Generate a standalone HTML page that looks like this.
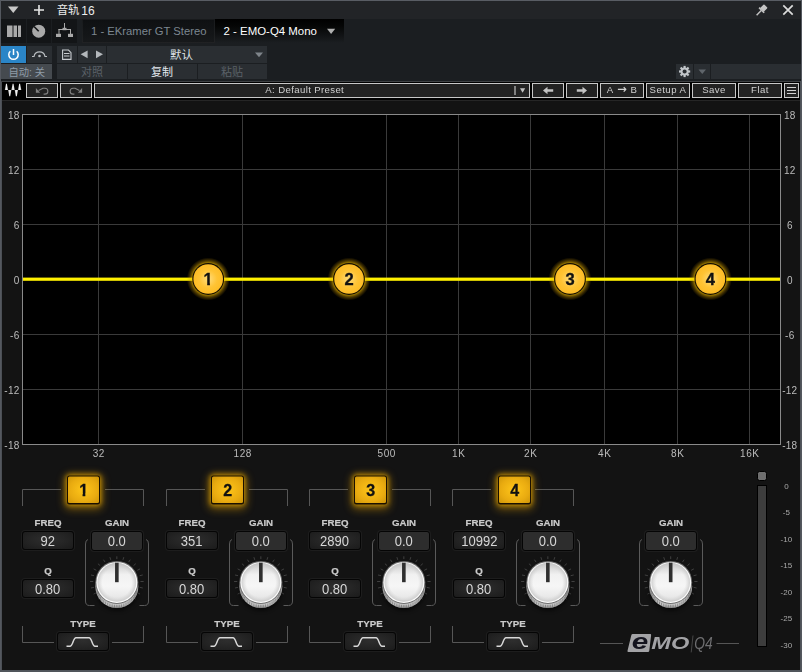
<!DOCTYPE html>
<html lang="zh">
<head>
<meta charset="utf-8">
<title>EMO-Q4</title>
<style>
html,body{margin:0;padding:0;background:#1b1e21;}
body{width:802px;height:672px;position:relative;overflow:hidden;font-family:"Liberation Sans","Noto Sans CJK SC",sans-serif;}
.a{position:absolute;box-sizing:border-box;}
.t{position:absolute;white-space:nowrap;line-height:1;}
/* host chrome */
#win{left:0;top:0;width:802px;height:672px;background:#1b1e21;}
#title{left:0;top:0;width:802px;height:19px;background:#222427;border-top:1px solid #595d64;}
.hb{background:#141618;}
.hb2{background:#2b2f33;}
.cn{font-family:"Liberation Sans","Noto Sans CJK SC",sans-serif;}
/* plugin */
#plug{left:2px;top:82px;width:798px;height:588px;background:#131313;}
#ptb{left:2px;top:82px;width:798px;height:18px;background:#000;}
.pb{position:absolute;box-sizing:border-box;border:1px solid #c8c8c8;background:#222;top:83px;height:15px;color:#d0d0d0;font-size:9.6px;letter-spacing:0.45px;line-height:12.4px;text-align:center;font-family:"Liberation Sans",sans-serif;white-space:nowrap;}
.lbl{position:absolute;color:#cbcbcb;font-weight:bold;font-size:9.7px;line-height:10px;-webkit-text-stroke:0.2px #cbcbcb;margin-top:-0.2px;text-align:center;width:60px;}
.vbox{position:absolute;box-sizing:border-box;border:1px solid #050505;border-radius:3px;background:radial-gradient(ellipse at 50% 45%,#2e2e2e 0%,#262626 45%,#1b1b1b 100%);color:#d6d6d6;font-size:14px;line-height:18.4px;text-align:center;width:52px;height:19px;box-shadow:0 0 0 1px rgba(60,60,60,0.25);}
.gbox{background:#2d2d2d;height:20px;line-height:18.4px;}
.vbox span{display:inline-block;transform:scaleX(0.93);}
.ax{position:absolute;color:#bcbcbc;font-size:10px;line-height:10px;letter-spacing:0.25px;}
.ms{position:absolute;color:#a8a8a8;font-size:8px;line-height:8px;text-align:center;width:30px;left:771.4px;}
</style>
</head>
<body>
<div id="win" class="a"></div>
<div id="title" class="a"></div>
<svg class="a" style="left:0;top:0" width="802" height="20" viewBox="0 0 802 20"><path d="M8 6.5 L18.5 6.5 L13.25 13 Z" fill="#c8c8c8"/><path d="M39 5 V15 M34 10 H44" stroke="#e6e6e6" stroke-width="1.6" fill="none"/><g transform="translate(761.2,10.6) rotate(45)" fill="#c4c4c4"><rect x="-2.6" y="-6.5" width="5.2" height="5.5" rx="0.8"/><rect x="-3.6" y="-1.4" width="7.2" height="1.6"/><rect x="-0.7" y="0" width="1.4" height="6.5"/></g><path d="M783.3 5.3 L792.7 14.7 M792.7 5.3 L783.3 14.7" stroke="#dcdcdc" stroke-width="1.7" fill="none"/></svg>
<div class="t" style="left:56.7px;top:4px;font-size:11.4px;color:#ececec;line-height:13px;">音轨<span style="font-size:12px;margin-left:1.8px;position:relative;top:0.5px">16</span></div>
<div class="a" style="left:1px;top:19px;width:25px;height:24px;background:#131517;"></div>
<div class="a" style="left:27px;top:19px;width:24px;height:24px;background:#131517;"></div>
<div class="a" style="left:52px;top:19px;width:25px;height:24px;background:#131517;"></div>
<svg class="a" style="left:0;top:19px" width="80" height="24" viewBox="0 19 80 24"><rect x="7" y="25.5" width="5.5" height="11.5" fill="#a9a9a9"/><rect x="13.5" y="25.5" width="3.5" height="11.5" fill="#a9a9a9"/><rect x="18" y="25.5" width="3" height="11.5" fill="#a9a9a9"/><circle cx="38.7" cy="31.2" r="6.5" fill="#a9a9a9"/><path d="M38.7 31.2 L34 26.5" stroke="#131517" stroke-width="1.6"/><g fill="#a9a9a9"><rect x="64" y="23" width="1" height="6"/><rect x="62.5" y="27.8" width="4" height="2.4"/><rect x="58.5" y="29" width="12.5" height="1"/><rect x="58.5" y="29" width="1" height="5"/><rect x="70" y="29" width="1" height="5"/><rect x="56" y="33.8" width="5" height="3.2"/><rect x="68" y="33.8" width="5" height="3.2"/></g></svg>
<div class="a" style="left:82px;top:19px;width:133px;height:24px;background:linear-gradient(#0e1012,#17191b);box-shadow:inset 0 0 0 1px rgba(255,255,255,0.045);"></div>
<div class="t" style="left:91px;top:25.5px;font-size:11.25px;color:#7d8791;">1 - EKramer GT Stereo</div>
<div class="a" style="left:215px;top:19px;width:129px;height:24px;background:linear-gradient(#000 0%,#050606 30%,#1b1e21 100%);"></div>
<div class="t" style="left:223.5px;top:25.5px;font-size:11.45px;color:#ffffff;">2 - EMO-Q4 Mono</div>
<svg class="a" style="left:324px;top:27px" width="14" height="8"><path d="M3 1.8 H11.2 L7.1 7 Z" fill="#b0b0b0"/></svg>
<div class="a" style="left:1px;top:46px;width:25px;height:17px;background:#2a85c7;"></div>
<div class="a" style="left:27px;top:46px;width:25px;height:17px;background:#2a2e32;"></div>
<div class="a" style="left:57px;top:46px;width:20px;height:17px;background:#2a2e32;"></div>
<div class="a" style="left:78px;top:46px;width:28px;height:17px;background:#2a2e32;"></div>
<div class="a" style="left:107px;top:46px;width:160px;height:17px;background:#2a2e32;"></div>
<svg class="a" style="left:0;top:46px" width="270" height="17" viewBox="0 46 270 17"><path d="M10.3 51.2 A4.7 4.7 0 1 0 16.7 51.2" stroke="#fff" stroke-width="1.5" fill="none"/><path d="M13.5 49 V55" stroke="#fff" stroke-width="1.5"/><path d="M32 56.5 H34 A5.6 5.6 0 0 1 45 56.5 H47" stroke="#b9bdc1" stroke-width="1.2" fill="none"/><circle cx="39.5" cy="56" r="1.3" fill="#b9bdc1"/><path d="M62.6 50 H68.5 L71 52.6 V59.4 H62.6 Z M64 53.5 H69.5 M64 56 H69.5" stroke="#c9cdd1" stroke-width="1.1" fill="none"/><path d="M87.6 50.4 V58.2 L80.6 54.3 Z" fill="#b4b8bc"/><path d="M96 50.4 V58.2 L103 54.3 Z" fill="#b4b8bc"/><path d="M255 52.5 H263 L259 57.2 Z" fill="#7f858b"/></svg>
<div class="t" style="left:170px;top:49px;font-size:11.5px;color:#dfe3e7;line-height:12px;">默认</div>
<div class="a" style="left:1px;top:64px;width:51px;height:15px;background:#454a4f;"></div>
<div class="a" style="left:57px;top:64px;width:70px;height:15px;background:#2a2e32;"></div>
<div class="a" style="left:128px;top:64px;width:69px;height:15px;background:#2a2e32;"></div>
<div class="a" style="left:198px;top:64px;width:69px;height:15px;background:#2a2e32;"></div>
<div class="t" style="left:8.5px;top:66.5px;font-size:10.3px;color:#8f9ca8;line-height:12px;">自动: 关</div>
<div class="t" style="left:81px;top:66px;font-size:11px;color:#5a6168;line-height:12px;">对照</div>
<div class="t" style="left:151px;top:66px;font-size:11px;color:#e3e8ee;line-height:12px;">复制</div>
<div class="t" style="left:221px;top:66px;font-size:11px;color:#5a6168;line-height:12px;">粘贴</div>
<div class="a" style="left:676px;top:64px;width:17px;height:15px;background:#2a2e32;"></div>
<div class="a" style="left:694px;top:64px;width:16px;height:15px;background:#2a2e32;"></div>
<div class="a" style="left:711px;top:64px;width:90px;height:15px;background:#2a2e32;"></div>
<svg class="a" style="left:676px;top:64px" width="36" height="15" viewBox="676 64 36 15"><rect x="683.5" y="65.9" width="2.2" height="3" fill="#c2c6ca" transform="rotate(0 684.6 71.5)"/><rect x="683.5" y="65.9" width="2.2" height="3" fill="#c2c6ca" transform="rotate(45 684.6 71.5)"/><rect x="683.5" y="65.9" width="2.2" height="3" fill="#c2c6ca" transform="rotate(90 684.6 71.5)"/><rect x="683.5" y="65.9" width="2.2" height="3" fill="#c2c6ca" transform="rotate(135 684.6 71.5)"/><rect x="683.5" y="65.9" width="2.2" height="3" fill="#c2c6ca" transform="rotate(180 684.6 71.5)"/><rect x="683.5" y="65.9" width="2.2" height="3" fill="#c2c6ca" transform="rotate(225 684.6 71.5)"/><rect x="683.5" y="65.9" width="2.2" height="3" fill="#c2c6ca" transform="rotate(270 684.6 71.5)"/><rect x="683.5" y="65.9" width="2.2" height="3" fill="#c2c6ca" transform="rotate(315 684.6 71.5)"/><circle cx="684.6" cy="71.5" r="3.1" fill="none" stroke="#c2c6ca" stroke-width="2"/><path d="M698.5 69.5 H706 L702.25 74 Z" fill="#5f656b"/></svg>
<div class="a" style="left:1px;top:81px;width:800px;height:1px;background:#3e4144;"></div>
<div class="a" style="left:1px;top:82px;width:1px;height:588px;background:#4b4f55;"></div>
<div id="plug" class="a"></div>
<div class="a" id="pl" style="left:0;top:0;width:802px;height:672px;will-change:transform;">
<div id="ptb" class="a"></div>
<svg class="a" style="left:2px;top:82px" width="24" height="18" viewBox="2 82 24 18"><defs><linearGradient id="wg" x1="0" y1="0" x2="1" y2="0"><stop offset="0" stop-color="#bdbdbd"/><stop offset="0.5" stop-color="#f4f4f4"/><stop offset="1" stop-color="#c8c8c8"/></linearGradient></defs><g fill="url(#wg)"><path d="M6 83.7 H6.9 L8.1 90 H4.8 Z"/><path d="M12.6 83.7 H13.5 L14.7 90 H11.4 Z"/><path d="M19.2 83.7 H20.1 L21.3 90 H18 Z"/><path d="M8.1 90 H11.4 L10.2 96.2 H9.3 Z"/><path d="M14.7 90 H18 L16.8 96.2 H15.9 Z"/></g></svg>
<div class="pb" style="left:26px;width:32px;"></div>
<div class="pb" style="left:60px;width:32px;"></div>
<div class="pb" style="left:94px;width:436px;padding-right:14.5px;letter-spacing:0.37px;">A: Default Preset</div>
<div class="pb" style="left:532px;width:32px;"></div>
<div class="pb" style="left:566px;width:32px;"></div>
<div class="pb" style="left:600px;width:44px;">A<span style="display:inline-block;width:17px;text-align:center;letter-spacing:0;font-family:'DejaVu Sans',sans-serif;font-size:11.5px;font-weight:bold;line-height:10px;position:relative;top:0.4px">→</span>B</div>
<div class="pb" style="left:646px;width:44px;">Setup A</div>
<div class="pb" style="left:692px;width:44px;">Save</div>
<div class="pb" style="left:738px;width:44px;">Flat</div>
<div class="pb" style="left:784px;width:15px;"></div>
<svg class="a" style="left:0;top:82px" width="802" height="18" viewBox="0 82 802 18"><g><path d="M38.6 90.4 L42.9 88.2 H44.9 A2.95 2.95 0 0 1 44.9 94.1 H43.6" stroke="#808080" stroke-width="1.1" fill="none"/><path d="M35.9 88 V92.7 H40.1 Z" fill="#808080"/></g><g transform="translate(118,0) scale(-1,1)"><path d="M38.6 90.4 L42.9 88.2 H44.9 A2.95 2.95 0 0 1 44.9 94.1 H43.6" stroke="#808080" stroke-width="1.1" fill="none"/><path d="M35.9 88 V92.7 H40.1 Z" fill="#808080"/></g><rect x="514.2" y="86" width="1.6" height="9" fill="#9a9a9a"/><path d="M520 88.3 H525.2 L522.6 92.8 Z" fill="#c0c0c0"/><path d="M543 90.5 L547.5 86.8 V89.2 H553.2 V91.8 H547.5 V94.2 Z" fill="#c4c4c4"/><path d="M587 90.5 L582.5 86.8 V89.2 H576.8 V91.8 H582.5 V94.2 Z" fill="#c4c4c4"/><path d="M787 87.5 H796 M787 90.5 H796 M787 93.5 H796" stroke="#d0d0d0" stroke-width="1.2"/></svg>
<div class="a" style="left:2px;top:100px;width:798px;height:1px;background:#262626"></div>
<svg class="a" style="left:0;top:104px" width="802" height="360" viewBox="0 104 802 360">
<defs><clipPath id="c1a"><path d="M198 265 H220 V283.1 H209.9 V287 H207.2 V283.1 H198 Z"/></clipPath><radialGradient id="ng" cx="50%" cy="50%" r="50%"><stop offset="0" stop-color="#ffdc7c"/><stop offset="0.6" stop-color="#ffc333"/><stop offset="1" stop-color="#fdbc26"/></radialGradient><radialGradient id="glow" cx="50%" cy="50%" r="50%"><stop offset="0.72" stop-color="#ffc800" stop-opacity="0.7"/><stop offset="0.84" stop-color="#e0a800" stop-opacity="0.36"/><stop offset="1" stop-color="#c89000" stop-opacity="0"/></radialGradient></defs>
<rect x="22.5" y="114.5" width="758" height="330" fill="#000" stroke="#8a8a8a" stroke-width="1"/>
<rect x="23" y="169" width="757" height="1" fill="#3a3a3a"/>
<rect x="23" y="224" width="757" height="1" fill="#3a3a3a"/>
<rect x="23" y="279" width="757" height="1" fill="#3a3a3a"/>
<rect x="23" y="334" width="757" height="1" fill="#3a3a3a"/>
<rect x="23" y="389" width="757" height="1" fill="#3a3a3a"/>
<rect x="98" y="115" width="1" height="329" fill="#3a3a3a"/>
<rect x="242" y="115" width="1" height="329" fill="#3a3a3a"/>
<rect x="386" y="115" width="1" height="329" fill="#3a3a3a"/>
<rect x="458" y="115" width="1" height="329" fill="#3a3a3a"/>
<rect x="530" y="115" width="1" height="329" fill="#3a3a3a"/>
<rect x="604" y="115" width="1" height="329" fill="#3a3a3a"/>
<rect x="677" y="115" width="1" height="329" fill="#3a3a3a"/>
<rect x="749" y="115" width="1" height="329" fill="#3a3a3a"/>
<rect x="23" y="277.6" width="757" height="3.2" fill="#fff000"/>
<circle cx="208.2" cy="279" r="21.5" fill="url(#glow)"/>
<circle cx="208.2" cy="279" r="15.9" fill="#120c00"/>
<circle cx="208.2" cy="279" r="14.8" fill="url(#ng)"/>
<text x="208.2" y="285" text-anchor="middle" font-family="Liberation Sans, sans-serif" font-weight="bold" font-size="16.5" fill="#111" stroke="#111" stroke-width="0.35" clip-path="url(#c1a)">1</text>
<circle cx="349" cy="279" r="21.5" fill="url(#glow)"/>
<circle cx="349" cy="279" r="15.9" fill="#120c00"/>
<circle cx="349" cy="279" r="14.8" fill="url(#ng)"/>
<text x="349" y="285" text-anchor="middle" font-family="Liberation Sans, sans-serif" font-weight="bold" font-size="16.5" fill="#111" stroke="#111" stroke-width="0.35">2</text>
<circle cx="570" cy="279" r="21.5" fill="url(#glow)"/>
<circle cx="570" cy="279" r="15.9" fill="#120c00"/>
<circle cx="570" cy="279" r="14.8" fill="url(#ng)"/>
<text x="570" y="285" text-anchor="middle" font-family="Liberation Sans, sans-serif" font-weight="bold" font-size="16.5" fill="#111" stroke="#111" stroke-width="0.35">3</text>
<circle cx="710.4" cy="279" r="21.5" fill="url(#glow)"/>
<circle cx="710.4" cy="279" r="15.9" fill="#120c00"/>
<circle cx="710.4" cy="279" r="14.8" fill="url(#ng)"/>
<text x="710.4" y="285" text-anchor="middle" font-family="Liberation Sans, sans-serif" font-weight="bold" font-size="16.5" fill="#111" stroke="#111" stroke-width="0.35">4</text>
</svg>
<div class="ax" style="left:0;width:19.5px;text-align:right;top:111.4px">18</div>
<div class="ax" style="left:774.8px;width:30px;text-align:center;top:111.4px">18</div>
<div class="ax" style="left:0;width:19.5px;text-align:right;top:166.4px">12</div>
<div class="ax" style="left:774.8px;width:30px;text-align:center;top:166.4px">12</div>
<div class="ax" style="left:0;width:19.5px;text-align:right;top:221.4px">6</div>
<div class="ax" style="left:774.8px;width:30px;text-align:center;top:221.4px">6</div>
<div class="ax" style="left:0;width:19.5px;text-align:right;top:276.4px">0</div>
<div class="ax" style="left:774.8px;width:30px;text-align:center;top:276.4px">0</div>
<div class="ax" style="left:0;width:19.5px;text-align:right;top:331.4px">-6</div>
<div class="ax" style="left:774.8px;width:30px;text-align:center;top:331.4px">-6</div>
<div class="ax" style="left:0;width:19.5px;text-align:right;top:386.4px">-12</div>
<div class="ax" style="left:774.8px;width:30px;text-align:center;top:386.4px">-12</div>
<div class="ax" style="left:0;width:19.5px;text-align:right;top:441.4px">-18</div>
<div class="ax" style="left:774.8px;width:30px;text-align:center;top:441.4px">-18</div>
<div class="ax" style="left:78.8px;width:40px;text-align:center;top:449px;letter-spacing:0.6px">32</div>
<div class="ax" style="left:222.8px;width:40px;text-align:center;top:449px;letter-spacing:0.6px">128</div>
<div class="ax" style="left:366.8px;width:40px;text-align:center;top:449px;letter-spacing:0.6px">500</div>
<div class="ax" style="left:438.8px;width:40px;text-align:center;top:449px;letter-spacing:0.6px">1K</div>
<div class="ax" style="left:510.8px;width:40px;text-align:center;top:449px;letter-spacing:0.6px">2K</div>
<div class="ax" style="left:584.8px;width:40px;text-align:center;top:449px;letter-spacing:0.6px">4K</div>
<div class="ax" style="left:657.8px;width:40px;text-align:center;top:449px;letter-spacing:0.6px">8K</div>
<div class="ax" style="left:729.8px;width:40px;text-align:center;top:449px;letter-spacing:0.6px">16K</div>
<div class="vbox" style="left:57px;top:632px"></div>
<div class="vbox" style="left:201px;top:632px"></div>
<div class="vbox" style="left:344px;top:632px"></div>
<div class="vbox" style="left:487px;top:632px"></div>
<svg class="a" style="left:0;top:464px" width="802" height="206" viewBox="0 464 802 206">
<defs><clipPath id="c1b"><path d="M74 478 H94 V493.6 H85.3 V498 H82.6 V493.6 H74 Z"/></clipPath><radialGradient id="bb" cx="50%" cy="50%" r="75%"><stop offset="0" stop-color="#ffc61a"/><stop offset="0.6" stop-color="#e9ab10"/><stop offset="1" stop-color="#c99208"/></radialGradient><filter id="bl" x="-50%" y="-50%" width="200%" height="200%"><feGaussianBlur stdDeviation="2.6"/></filter><filter id="bl2" x="-60%" y="-60%" width="220%" height="220%"><feGaussianBlur stdDeviation="4.5"/></filter><filter id="sh" x="-50%" y="-50%" width="200%" height="200%"><feGaussianBlur stdDeviation="2.2"/></filter><linearGradient id="kf" x1="0" y1="0" x2="0" y2="1"><stop offset="0" stop-color="#c9c9c9"/><stop offset="0.3" stop-color="#f1f1f1"/><stop offset="0.6" stop-color="#f6f6f6"/><stop offset="1" stop-color="#e2e2e2"/></linearGradient><radialGradient id="kr" cx="50%" cy="50%" r="50%"><stop offset="0.75" stop-color="#d0d0d0" stop-opacity="0"/><stop offset="1" stop-color="#c4c4c4" stop-opacity="0.75"/></radialGradient><linearGradient id="ks" x1="0" y1="0" x2="0" y2="1"><stop offset="0" stop-color="#8a8a8a"/><stop offset="0.7" stop-color="#b0b0b0"/><stop offset="0.92" stop-color="#c4c4c4"/><stop offset="1" stop-color="#8c8c8c"/></linearGradient></defs>
<path d="M22.5 506 V489.5 H61 M105 489.5 H143.5 V506" stroke="#565656" stroke-width="1" fill="none"/>
<path d="M22.5 626 V642.5 H54 M112 642.5 H143.5 V626" stroke="#565656" stroke-width="1" fill="none"/>
<rect x="64" y="474" width="39" height="36" rx="6" fill="#d89a00" opacity="0.42" filter="url(#bl2)"/>
<rect x="66" y="474.5" width="35" height="31" rx="4" fill="#e8a800" opacity="0.75" filter="url(#bl)"/>
<rect x="67" y="475.5" width="33" height="29" rx="2.5" fill="#1a1000"/>
<rect x="68" y="476.5" width="31" height="26.5" rx="1.5" fill="url(#bb)"/>
<text x="83.6" y="496" text-anchor="middle" font-family="Liberation Sans, sans-serif" font-weight="bold" font-size="16" fill="#111" stroke="#111" stroke-width="0.3" clip-path="url(#c1b)">1</text>
<path d="M88.0 539.5 Q85.5 540 85.5 544 V601 Q85.5 605.5 89.5 605.5 H94.5" stroke="#5a5a5a" stroke-width="1" fill="none"/><path d="M146.0 539.5 Q148.5 540 148.5 544 V601 Q148.5 605.5 144.5 605.5 H139.5" stroke="#5a5a5a" stroke-width="1" fill="none"/>
<path d="M100.16 597.34 L97.90 599.32" stroke="#404040" stroke-width="1"/><path d="M96.41 592.70 L93.64 594.10" stroke="#404040" stroke-width="1"/><path d="M94.05 587.30 L90.96 588.02" stroke="#404040" stroke-width="1"/><path d="M93.25 581.50 L90.05 581.50" stroke="#404040" stroke-width="1"/><path d="M94.05 575.70 L90.96 574.98" stroke="#404040" stroke-width="1"/><path d="M96.41 570.30 L93.64 568.90" stroke="#404040" stroke-width="1"/><path d="M100.16 565.66 L97.90 563.68" stroke="#404040" stroke-width="1"/><path d="M105.05 562.10 L103.45 559.68" stroke="#404040" stroke-width="1"/><path d="M110.74 559.86 L109.91 557.16" stroke="#404040" stroke-width="1"/><path d="M116.85 559.10 L116.85 556.30" stroke="#404040" stroke-width="1"/><path d="M122.96 559.86 L123.79 557.16" stroke="#404040" stroke-width="1"/><path d="M128.65 562.10 L130.25 559.68" stroke="#404040" stroke-width="1"/><path d="M133.54 565.66 L135.80 563.68" stroke="#404040" stroke-width="1"/><path d="M137.29 570.30 L140.06 568.90" stroke="#404040" stroke-width="1"/><path d="M139.65 575.70 L142.74 574.98" stroke="#404040" stroke-width="1"/><path d="M140.45 581.50 L143.65 581.50" stroke="#404040" stroke-width="1"/><path d="M139.65 587.30 L142.74 588.02" stroke="#404040" stroke-width="1"/><path d="M137.29 592.70 L140.06 594.10" stroke="#404040" stroke-width="1"/><path d="M133.54 597.34 L135.80 599.32" stroke="#404040" stroke-width="1"/><ellipse cx="116.85" cy="590.4" rx="21" ry="20" fill="#000" opacity="0.6" filter="url(#sh)"/><circle cx="116.85" cy="586.6" r="21.5" fill="url(#ks)"/><path d="M136.67 590.63 V593.83" stroke="#6e6e6e" stroke-width="0.8" opacity="0.8"/><path d="M135.79 592.83 V596.03" stroke="#6e6e6e" stroke-width="0.8" opacity="0.8"/><path d="M134.67 594.92 V598.12" stroke="#6e6e6e" stroke-width="0.8" opacity="0.8"/><path d="M133.32 596.87 V600.07" stroke="#6e6e6e" stroke-width="0.8" opacity="0.8"/><path d="M131.76 598.65 V601.85" stroke="#6e6e6e" stroke-width="0.8" opacity="0.8"/><path d="M130.00 600.24 V603.44" stroke="#6e6e6e" stroke-width="0.8" opacity="0.8"/><path d="M128.08 601.63 V604.83" stroke="#6e6e6e" stroke-width="0.8" opacity="0.8"/><path d="M126.01 602.78 V605.98" stroke="#6e6e6e" stroke-width="0.8" opacity="0.8"/><path d="M123.83 603.70 V606.90" stroke="#6e6e6e" stroke-width="0.8" opacity="0.8"/><path d="M121.55 604.36 V607.56" stroke="#6e6e6e" stroke-width="0.8" opacity="0.8"/><path d="M119.22 604.77 V607.97" stroke="#6e6e6e" stroke-width="0.8" opacity="0.8"/><path d="M116.85 604.90 V608.10" stroke="#6e6e6e" stroke-width="0.8" opacity="0.8"/><path d="M114.48 604.77 V607.97" stroke="#6e6e6e" stroke-width="0.8" opacity="0.8"/><path d="M112.15 604.36 V607.56" stroke="#6e6e6e" stroke-width="0.8" opacity="0.8"/><path d="M109.87 603.70 V606.90" stroke="#6e6e6e" stroke-width="0.8" opacity="0.8"/><path d="M107.69 602.78 V605.98" stroke="#6e6e6e" stroke-width="0.8" opacity="0.8"/><path d="M105.62 601.63 V604.83" stroke="#6e6e6e" stroke-width="0.8" opacity="0.8"/><path d="M103.70 600.24 V603.44" stroke="#6e6e6e" stroke-width="0.8" opacity="0.8"/><path d="M101.94 598.65 V601.85" stroke="#6e6e6e" stroke-width="0.8" opacity="0.8"/><path d="M100.38 596.87 V600.07" stroke="#6e6e6e" stroke-width="0.8" opacity="0.8"/><path d="M99.03 594.92 V598.12" stroke="#6e6e6e" stroke-width="0.8" opacity="0.8"/><path d="M97.91 592.83 V596.03" stroke="#6e6e6e" stroke-width="0.8" opacity="0.8"/><path d="M97.03 590.63 V593.83" stroke="#6e6e6e" stroke-width="0.8" opacity="0.8"/><circle cx="116.85" cy="582.4" r="21.5" fill="#6f6f6f"/><circle cx="116.85" cy="582.4" r="20.5" fill="#fbfbfb"/><circle cx="116.85" cy="582.4" r="19.3" fill="url(#kf)"/><circle cx="116.85" cy="582.4" r="19.3" fill="url(#kr)"/><rect x="115.05" y="562.6" width="3.6" height="19.6" fill="#2e2e2e"/>
<path d="M66.5 646.3 H70 C73 646.3 73 637.8 76 637.8 H89 C92 637.8 92 646.3 95 646.3 H98" stroke="#d8d8d8" stroke-width="1.5" fill="none"/>
<path d="M166.5 506 V489.5 H205 M249 489.5 H287.5 V506" stroke="#565656" stroke-width="1" fill="none"/>
<path d="M166.5 626 V642.5 H198 M256 642.5 H287.5 V626" stroke="#565656" stroke-width="1" fill="none"/>
<rect x="208" y="474" width="39" height="36" rx="6" fill="#d89a00" opacity="0.42" filter="url(#bl2)"/>
<rect x="210" y="474.5" width="35" height="31" rx="4" fill="#e8a800" opacity="0.75" filter="url(#bl)"/>
<rect x="211" y="475.5" width="33" height="29" rx="2.5" fill="#1a1000"/>
<rect x="212" y="476.5" width="31" height="26.5" rx="1.5" fill="url(#bb)"/>
<text x="227.6" y="496" text-anchor="middle" font-family="Liberation Sans, sans-serif" font-weight="bold" font-size="16" fill="#111" stroke="#111" stroke-width="0.3">2</text>
<path d="M232.0 539.5 Q229.5 540 229.5 544 V601 Q229.5 605.5 233.5 605.5 H238.5" stroke="#5a5a5a" stroke-width="1" fill="none"/><path d="M290.0 539.5 Q292.5 540 292.5 544 V601 Q292.5 605.5 288.5 605.5 H283.5" stroke="#5a5a5a" stroke-width="1" fill="none"/>
<path d="M244.16 597.34 L241.90 599.32" stroke="#404040" stroke-width="1"/><path d="M240.41 592.70 L237.64 594.10" stroke="#404040" stroke-width="1"/><path d="M238.05 587.30 L234.96 588.02" stroke="#404040" stroke-width="1"/><path d="M237.25 581.50 L234.05 581.50" stroke="#404040" stroke-width="1"/><path d="M238.05 575.70 L234.96 574.98" stroke="#404040" stroke-width="1"/><path d="M240.41 570.30 L237.64 568.90" stroke="#404040" stroke-width="1"/><path d="M244.16 565.66 L241.90 563.68" stroke="#404040" stroke-width="1"/><path d="M249.05 562.10 L247.45 559.68" stroke="#404040" stroke-width="1"/><path d="M254.74 559.86 L253.91 557.16" stroke="#404040" stroke-width="1"/><path d="M260.85 559.10 L260.85 556.30" stroke="#404040" stroke-width="1"/><path d="M266.96 559.86 L267.79 557.16" stroke="#404040" stroke-width="1"/><path d="M272.65 562.10 L274.25 559.68" stroke="#404040" stroke-width="1"/><path d="M277.54 565.66 L279.80 563.68" stroke="#404040" stroke-width="1"/><path d="M281.29 570.30 L284.06 568.90" stroke="#404040" stroke-width="1"/><path d="M283.65 575.70 L286.74 574.98" stroke="#404040" stroke-width="1"/><path d="M284.45 581.50 L287.65 581.50" stroke="#404040" stroke-width="1"/><path d="M283.65 587.30 L286.74 588.02" stroke="#404040" stroke-width="1"/><path d="M281.29 592.70 L284.06 594.10" stroke="#404040" stroke-width="1"/><path d="M277.54 597.34 L279.80 599.32" stroke="#404040" stroke-width="1"/><ellipse cx="260.85" cy="590.4" rx="21" ry="20" fill="#000" opacity="0.6" filter="url(#sh)"/><circle cx="260.85" cy="586.6" r="21.5" fill="url(#ks)"/><path d="M280.67 590.63 V593.83" stroke="#6e6e6e" stroke-width="0.8" opacity="0.8"/><path d="M279.79 592.83 V596.03" stroke="#6e6e6e" stroke-width="0.8" opacity="0.8"/><path d="M278.67 594.92 V598.12" stroke="#6e6e6e" stroke-width="0.8" opacity="0.8"/><path d="M277.32 596.87 V600.07" stroke="#6e6e6e" stroke-width="0.8" opacity="0.8"/><path d="M275.76 598.65 V601.85" stroke="#6e6e6e" stroke-width="0.8" opacity="0.8"/><path d="M274.00 600.24 V603.44" stroke="#6e6e6e" stroke-width="0.8" opacity="0.8"/><path d="M272.08 601.63 V604.83" stroke="#6e6e6e" stroke-width="0.8" opacity="0.8"/><path d="M270.01 602.78 V605.98" stroke="#6e6e6e" stroke-width="0.8" opacity="0.8"/><path d="M267.83 603.70 V606.90" stroke="#6e6e6e" stroke-width="0.8" opacity="0.8"/><path d="M265.55 604.36 V607.56" stroke="#6e6e6e" stroke-width="0.8" opacity="0.8"/><path d="M263.22 604.77 V607.97" stroke="#6e6e6e" stroke-width="0.8" opacity="0.8"/><path d="M260.85 604.90 V608.10" stroke="#6e6e6e" stroke-width="0.8" opacity="0.8"/><path d="M258.48 604.77 V607.97" stroke="#6e6e6e" stroke-width="0.8" opacity="0.8"/><path d="M256.15 604.36 V607.56" stroke="#6e6e6e" stroke-width="0.8" opacity="0.8"/><path d="M253.87 603.70 V606.90" stroke="#6e6e6e" stroke-width="0.8" opacity="0.8"/><path d="M251.69 602.78 V605.98" stroke="#6e6e6e" stroke-width="0.8" opacity="0.8"/><path d="M249.62 601.63 V604.83" stroke="#6e6e6e" stroke-width="0.8" opacity="0.8"/><path d="M247.70 600.24 V603.44" stroke="#6e6e6e" stroke-width="0.8" opacity="0.8"/><path d="M245.94 598.65 V601.85" stroke="#6e6e6e" stroke-width="0.8" opacity="0.8"/><path d="M244.38 596.87 V600.07" stroke="#6e6e6e" stroke-width="0.8" opacity="0.8"/><path d="M243.03 594.92 V598.12" stroke="#6e6e6e" stroke-width="0.8" opacity="0.8"/><path d="M241.91 592.83 V596.03" stroke="#6e6e6e" stroke-width="0.8" opacity="0.8"/><path d="M241.03 590.63 V593.83" stroke="#6e6e6e" stroke-width="0.8" opacity="0.8"/><circle cx="260.85" cy="582.4" r="21.5" fill="#6f6f6f"/><circle cx="260.85" cy="582.4" r="20.5" fill="#fbfbfb"/><circle cx="260.85" cy="582.4" r="19.3" fill="url(#kf)"/><circle cx="260.85" cy="582.4" r="19.3" fill="url(#kr)"/><rect x="259.05" y="562.6" width="3.6" height="19.6" fill="#2e2e2e"/>
<path d="M210.5 646.3 H214 C217 646.3 217 637.8 220 637.8 H233 C236 637.8 236 646.3 239 646.3 H242" stroke="#d8d8d8" stroke-width="1.5" fill="none"/>
<path d="M309.5 506 V489.5 H348 M392 489.5 H430.5 V506" stroke="#565656" stroke-width="1" fill="none"/>
<path d="M309.5 626 V642.5 H341 M399 642.5 H430.5 V626" stroke="#565656" stroke-width="1" fill="none"/>
<rect x="351" y="474" width="39" height="36" rx="6" fill="#d89a00" opacity="0.42" filter="url(#bl2)"/>
<rect x="353" y="474.5" width="35" height="31" rx="4" fill="#e8a800" opacity="0.75" filter="url(#bl)"/>
<rect x="354" y="475.5" width="33" height="29" rx="2.5" fill="#1a1000"/>
<rect x="355" y="476.5" width="31" height="26.5" rx="1.5" fill="url(#bb)"/>
<text x="370.6" y="496" text-anchor="middle" font-family="Liberation Sans, sans-serif" font-weight="bold" font-size="16" fill="#111" stroke="#111" stroke-width="0.3">3</text>
<path d="M375.0 539.5 Q372.5 540 372.5 544 V601 Q372.5 605.5 376.5 605.5 H381.5" stroke="#5a5a5a" stroke-width="1" fill="none"/><path d="M433.0 539.5 Q435.5 540 435.5 544 V601 Q435.5 605.5 431.5 605.5 H426.5" stroke="#5a5a5a" stroke-width="1" fill="none"/>
<path d="M387.16 597.34 L384.90 599.32" stroke="#404040" stroke-width="1"/><path d="M383.41 592.70 L380.64 594.10" stroke="#404040" stroke-width="1"/><path d="M381.05 587.30 L377.96 588.02" stroke="#404040" stroke-width="1"/><path d="M380.25 581.50 L377.05 581.50" stroke="#404040" stroke-width="1"/><path d="M381.05 575.70 L377.96 574.98" stroke="#404040" stroke-width="1"/><path d="M383.41 570.30 L380.64 568.90" stroke="#404040" stroke-width="1"/><path d="M387.16 565.66 L384.90 563.68" stroke="#404040" stroke-width="1"/><path d="M392.05 562.10 L390.45 559.68" stroke="#404040" stroke-width="1"/><path d="M397.74 559.86 L396.91 557.16" stroke="#404040" stroke-width="1"/><path d="M403.85 559.10 L403.85 556.30" stroke="#404040" stroke-width="1"/><path d="M409.96 559.86 L410.79 557.16" stroke="#404040" stroke-width="1"/><path d="M415.65 562.10 L417.25 559.68" stroke="#404040" stroke-width="1"/><path d="M420.54 565.66 L422.80 563.68" stroke="#404040" stroke-width="1"/><path d="M424.29 570.30 L427.06 568.90" stroke="#404040" stroke-width="1"/><path d="M426.65 575.70 L429.74 574.98" stroke="#404040" stroke-width="1"/><path d="M427.45 581.50 L430.65 581.50" stroke="#404040" stroke-width="1"/><path d="M426.65 587.30 L429.74 588.02" stroke="#404040" stroke-width="1"/><path d="M424.29 592.70 L427.06 594.10" stroke="#404040" stroke-width="1"/><path d="M420.54 597.34 L422.80 599.32" stroke="#404040" stroke-width="1"/><ellipse cx="403.85" cy="590.4" rx="21" ry="20" fill="#000" opacity="0.6" filter="url(#sh)"/><circle cx="403.85" cy="586.6" r="21.5" fill="url(#ks)"/><path d="M423.67 590.63 V593.83" stroke="#6e6e6e" stroke-width="0.8" opacity="0.8"/><path d="M422.79 592.83 V596.03" stroke="#6e6e6e" stroke-width="0.8" opacity="0.8"/><path d="M421.67 594.92 V598.12" stroke="#6e6e6e" stroke-width="0.8" opacity="0.8"/><path d="M420.32 596.87 V600.07" stroke="#6e6e6e" stroke-width="0.8" opacity="0.8"/><path d="M418.76 598.65 V601.85" stroke="#6e6e6e" stroke-width="0.8" opacity="0.8"/><path d="M417.00 600.24 V603.44" stroke="#6e6e6e" stroke-width="0.8" opacity="0.8"/><path d="M415.08 601.63 V604.83" stroke="#6e6e6e" stroke-width="0.8" opacity="0.8"/><path d="M413.01 602.78 V605.98" stroke="#6e6e6e" stroke-width="0.8" opacity="0.8"/><path d="M410.83 603.70 V606.90" stroke="#6e6e6e" stroke-width="0.8" opacity="0.8"/><path d="M408.55 604.36 V607.56" stroke="#6e6e6e" stroke-width="0.8" opacity="0.8"/><path d="M406.22 604.77 V607.97" stroke="#6e6e6e" stroke-width="0.8" opacity="0.8"/><path d="M403.85 604.90 V608.10" stroke="#6e6e6e" stroke-width="0.8" opacity="0.8"/><path d="M401.48 604.77 V607.97" stroke="#6e6e6e" stroke-width="0.8" opacity="0.8"/><path d="M399.15 604.36 V607.56" stroke="#6e6e6e" stroke-width="0.8" opacity="0.8"/><path d="M396.87 603.70 V606.90" stroke="#6e6e6e" stroke-width="0.8" opacity="0.8"/><path d="M394.69 602.78 V605.98" stroke="#6e6e6e" stroke-width="0.8" opacity="0.8"/><path d="M392.62 601.63 V604.83" stroke="#6e6e6e" stroke-width="0.8" opacity="0.8"/><path d="M390.70 600.24 V603.44" stroke="#6e6e6e" stroke-width="0.8" opacity="0.8"/><path d="M388.94 598.65 V601.85" stroke="#6e6e6e" stroke-width="0.8" opacity="0.8"/><path d="M387.38 596.87 V600.07" stroke="#6e6e6e" stroke-width="0.8" opacity="0.8"/><path d="M386.03 594.92 V598.12" stroke="#6e6e6e" stroke-width="0.8" opacity="0.8"/><path d="M384.91 592.83 V596.03" stroke="#6e6e6e" stroke-width="0.8" opacity="0.8"/><path d="M384.03 590.63 V593.83" stroke="#6e6e6e" stroke-width="0.8" opacity="0.8"/><circle cx="403.85" cy="582.4" r="21.5" fill="#6f6f6f"/><circle cx="403.85" cy="582.4" r="20.5" fill="#fbfbfb"/><circle cx="403.85" cy="582.4" r="19.3" fill="url(#kf)"/><circle cx="403.85" cy="582.4" r="19.3" fill="url(#kr)"/><rect x="402.05" y="562.6" width="3.6" height="19.6" fill="#2e2e2e"/>
<path d="M353.5 646.3 H357 C360 646.3 360 637.8 363 637.8 H376 C379 637.8 379 646.3 382 646.3 H385" stroke="#d8d8d8" stroke-width="1.5" fill="none"/>
<path d="M452.5 506 V489.5 H491 M535 489.5 H573.5 V506" stroke="#565656" stroke-width="1" fill="none"/>
<path d="M452.5 626 V642.5 H484 M542 642.5 H573.5 V626" stroke="#565656" stroke-width="1" fill="none"/>
<rect x="495" y="474" width="39" height="36" rx="6" fill="#d89a00" opacity="0.42" filter="url(#bl2)"/>
<rect x="497" y="474.5" width="35" height="31" rx="4" fill="#e8a800" opacity="0.75" filter="url(#bl)"/>
<rect x="498" y="475.5" width="33" height="29" rx="2.5" fill="#1a1000"/>
<rect x="499" y="476.5" width="31" height="26.5" rx="1.5" fill="url(#bb)"/>
<text x="514.6" y="496" text-anchor="middle" font-family="Liberation Sans, sans-serif" font-weight="bold" font-size="16" fill="#111" stroke="#111" stroke-width="0.3">4</text>
<path d="M519.0 539.5 Q516.5 540 516.5 544 V601 Q516.5 605.5 520.5 605.5 H525.5" stroke="#5a5a5a" stroke-width="1" fill="none"/><path d="M577.0 539.5 Q579.5 540 579.5 544 V601 Q579.5 605.5 575.5 605.5 H570.5" stroke="#5a5a5a" stroke-width="1" fill="none"/>
<path d="M531.16 597.34 L528.90 599.32" stroke="#404040" stroke-width="1"/><path d="M527.41 592.70 L524.64 594.10" stroke="#404040" stroke-width="1"/><path d="M525.05 587.30 L521.96 588.02" stroke="#404040" stroke-width="1"/><path d="M524.25 581.50 L521.05 581.50" stroke="#404040" stroke-width="1"/><path d="M525.05 575.70 L521.96 574.98" stroke="#404040" stroke-width="1"/><path d="M527.41 570.30 L524.64 568.90" stroke="#404040" stroke-width="1"/><path d="M531.16 565.66 L528.90 563.68" stroke="#404040" stroke-width="1"/><path d="M536.05 562.10 L534.45 559.68" stroke="#404040" stroke-width="1"/><path d="M541.74 559.86 L540.91 557.16" stroke="#404040" stroke-width="1"/><path d="M547.85 559.10 L547.85 556.30" stroke="#404040" stroke-width="1"/><path d="M553.96 559.86 L554.79 557.16" stroke="#404040" stroke-width="1"/><path d="M559.65 562.10 L561.25 559.68" stroke="#404040" stroke-width="1"/><path d="M564.54 565.66 L566.80 563.68" stroke="#404040" stroke-width="1"/><path d="M568.29 570.30 L571.06 568.90" stroke="#404040" stroke-width="1"/><path d="M570.65 575.70 L573.74 574.98" stroke="#404040" stroke-width="1"/><path d="M571.45 581.50 L574.65 581.50" stroke="#404040" stroke-width="1"/><path d="M570.65 587.30 L573.74 588.02" stroke="#404040" stroke-width="1"/><path d="M568.29 592.70 L571.06 594.10" stroke="#404040" stroke-width="1"/><path d="M564.54 597.34 L566.80 599.32" stroke="#404040" stroke-width="1"/><ellipse cx="547.85" cy="590.4" rx="21" ry="20" fill="#000" opacity="0.6" filter="url(#sh)"/><circle cx="547.85" cy="586.6" r="21.5" fill="url(#ks)"/><path d="M567.67 590.63 V593.83" stroke="#6e6e6e" stroke-width="0.8" opacity="0.8"/><path d="M566.79 592.83 V596.03" stroke="#6e6e6e" stroke-width="0.8" opacity="0.8"/><path d="M565.67 594.92 V598.12" stroke="#6e6e6e" stroke-width="0.8" opacity="0.8"/><path d="M564.32 596.87 V600.07" stroke="#6e6e6e" stroke-width="0.8" opacity="0.8"/><path d="M562.76 598.65 V601.85" stroke="#6e6e6e" stroke-width="0.8" opacity="0.8"/><path d="M561.00 600.24 V603.44" stroke="#6e6e6e" stroke-width="0.8" opacity="0.8"/><path d="M559.08 601.63 V604.83" stroke="#6e6e6e" stroke-width="0.8" opacity="0.8"/><path d="M557.01 602.78 V605.98" stroke="#6e6e6e" stroke-width="0.8" opacity="0.8"/><path d="M554.83 603.70 V606.90" stroke="#6e6e6e" stroke-width="0.8" opacity="0.8"/><path d="M552.55 604.36 V607.56" stroke="#6e6e6e" stroke-width="0.8" opacity="0.8"/><path d="M550.22 604.77 V607.97" stroke="#6e6e6e" stroke-width="0.8" opacity="0.8"/><path d="M547.85 604.90 V608.10" stroke="#6e6e6e" stroke-width="0.8" opacity="0.8"/><path d="M545.48 604.77 V607.97" stroke="#6e6e6e" stroke-width="0.8" opacity="0.8"/><path d="M543.15 604.36 V607.56" stroke="#6e6e6e" stroke-width="0.8" opacity="0.8"/><path d="M540.87 603.70 V606.90" stroke="#6e6e6e" stroke-width="0.8" opacity="0.8"/><path d="M538.69 602.78 V605.98" stroke="#6e6e6e" stroke-width="0.8" opacity="0.8"/><path d="M536.62 601.63 V604.83" stroke="#6e6e6e" stroke-width="0.8" opacity="0.8"/><path d="M534.70 600.24 V603.44" stroke="#6e6e6e" stroke-width="0.8" opacity="0.8"/><path d="M532.94 598.65 V601.85" stroke="#6e6e6e" stroke-width="0.8" opacity="0.8"/><path d="M531.38 596.87 V600.07" stroke="#6e6e6e" stroke-width="0.8" opacity="0.8"/><path d="M530.03 594.92 V598.12" stroke="#6e6e6e" stroke-width="0.8" opacity="0.8"/><path d="M528.91 592.83 V596.03" stroke="#6e6e6e" stroke-width="0.8" opacity="0.8"/><path d="M528.03 590.63 V593.83" stroke="#6e6e6e" stroke-width="0.8" opacity="0.8"/><circle cx="547.85" cy="582.4" r="21.5" fill="#6f6f6f"/><circle cx="547.85" cy="582.4" r="20.5" fill="#fbfbfb"/><circle cx="547.85" cy="582.4" r="19.3" fill="url(#kf)"/><circle cx="547.85" cy="582.4" r="19.3" fill="url(#kr)"/><rect x="546.0500000000001" y="562.6" width="3.6" height="19.6" fill="#2e2e2e"/>
<path d="M496.5 646.3 H500 C503 646.3 503 637.8 506 637.8 H519 C522 637.8 522 646.3 525 646.3 H528" stroke="#d8d8d8" stroke-width="1.5" fill="none"/>
<path d="M642.0 539.5 Q639.5 540 639.5 544 V601 Q639.5 605.5 643.5 605.5 H648.5" stroke="#5a5a5a" stroke-width="1" fill="none"/><path d="M700.0 539.5 Q702.5 540 702.5 544 V601 Q702.5 605.5 698.5 605.5 H693.5" stroke="#5a5a5a" stroke-width="1" fill="none"/>
<path d="M654.01 597.34 L651.75 599.32" stroke="#404040" stroke-width="1"/><path d="M650.26 592.70 L647.49 594.10" stroke="#404040" stroke-width="1"/><path d="M647.90 587.30 L644.81 588.02" stroke="#404040" stroke-width="1"/><path d="M647.10 581.50 L643.90 581.50" stroke="#404040" stroke-width="1"/><path d="M647.90 575.70 L644.81 574.98" stroke="#404040" stroke-width="1"/><path d="M650.26 570.30 L647.49 568.90" stroke="#404040" stroke-width="1"/><path d="M654.01 565.66 L651.75 563.68" stroke="#404040" stroke-width="1"/><path d="M658.90 562.10 L657.30 559.68" stroke="#404040" stroke-width="1"/><path d="M664.59 559.86 L663.76 557.16" stroke="#404040" stroke-width="1"/><path d="M670.70 559.10 L670.70 556.30" stroke="#404040" stroke-width="1"/><path d="M676.81 559.86 L677.64 557.16" stroke="#404040" stroke-width="1"/><path d="M682.50 562.10 L684.10 559.68" stroke="#404040" stroke-width="1"/><path d="M687.39 565.66 L689.65 563.68" stroke="#404040" stroke-width="1"/><path d="M691.14 570.30 L693.91 568.90" stroke="#404040" stroke-width="1"/><path d="M693.50 575.70 L696.59 574.98" stroke="#404040" stroke-width="1"/><path d="M694.30 581.50 L697.50 581.50" stroke="#404040" stroke-width="1"/><path d="M693.50 587.30 L696.59 588.02" stroke="#404040" stroke-width="1"/><path d="M691.14 592.70 L693.91 594.10" stroke="#404040" stroke-width="1"/><path d="M687.39 597.34 L689.65 599.32" stroke="#404040" stroke-width="1"/><ellipse cx="670.7" cy="590.4" rx="21" ry="20" fill="#000" opacity="0.6" filter="url(#sh)"/><circle cx="670.7" cy="586.6" r="21.5" fill="url(#ks)"/><path d="M690.52 590.63 V593.83" stroke="#6e6e6e" stroke-width="0.8" opacity="0.8"/><path d="M689.64 592.83 V596.03" stroke="#6e6e6e" stroke-width="0.8" opacity="0.8"/><path d="M688.52 594.92 V598.12" stroke="#6e6e6e" stroke-width="0.8" opacity="0.8"/><path d="M687.17 596.87 V600.07" stroke="#6e6e6e" stroke-width="0.8" opacity="0.8"/><path d="M685.61 598.65 V601.85" stroke="#6e6e6e" stroke-width="0.8" opacity="0.8"/><path d="M683.85 600.24 V603.44" stroke="#6e6e6e" stroke-width="0.8" opacity="0.8"/><path d="M681.93 601.63 V604.83" stroke="#6e6e6e" stroke-width="0.8" opacity="0.8"/><path d="M679.86 602.78 V605.98" stroke="#6e6e6e" stroke-width="0.8" opacity="0.8"/><path d="M677.68 603.70 V606.90" stroke="#6e6e6e" stroke-width="0.8" opacity="0.8"/><path d="M675.40 604.36 V607.56" stroke="#6e6e6e" stroke-width="0.8" opacity="0.8"/><path d="M673.07 604.77 V607.97" stroke="#6e6e6e" stroke-width="0.8" opacity="0.8"/><path d="M670.70 604.90 V608.10" stroke="#6e6e6e" stroke-width="0.8" opacity="0.8"/><path d="M668.33 604.77 V607.97" stroke="#6e6e6e" stroke-width="0.8" opacity="0.8"/><path d="M666.00 604.36 V607.56" stroke="#6e6e6e" stroke-width="0.8" opacity="0.8"/><path d="M663.72 603.70 V606.90" stroke="#6e6e6e" stroke-width="0.8" opacity="0.8"/><path d="M661.54 602.78 V605.98" stroke="#6e6e6e" stroke-width="0.8" opacity="0.8"/><path d="M659.47 601.63 V604.83" stroke="#6e6e6e" stroke-width="0.8" opacity="0.8"/><path d="M657.55 600.24 V603.44" stroke="#6e6e6e" stroke-width="0.8" opacity="0.8"/><path d="M655.79 598.65 V601.85" stroke="#6e6e6e" stroke-width="0.8" opacity="0.8"/><path d="M654.23 596.87 V600.07" stroke="#6e6e6e" stroke-width="0.8" opacity="0.8"/><path d="M652.88 594.92 V598.12" stroke="#6e6e6e" stroke-width="0.8" opacity="0.8"/><path d="M651.76 592.83 V596.03" stroke="#6e6e6e" stroke-width="0.8" opacity="0.8"/><path d="M650.88 590.63 V593.83" stroke="#6e6e6e" stroke-width="0.8" opacity="0.8"/><circle cx="670.7" cy="582.4" r="21.5" fill="#6f6f6f"/><circle cx="670.7" cy="582.4" r="20.5" fill="#fbfbfb"/><circle cx="670.7" cy="582.4" r="19.3" fill="url(#kf)"/><circle cx="670.7" cy="582.4" r="19.3" fill="url(#kr)"/><rect x="668.9000000000001" y="562.6" width="3.6" height="19.6" fill="#2e2e2e"/>
<rect x="757.5" y="471.5" width="9" height="9" rx="2" fill="#6e6e6e" stroke="#000" stroke-width="1"/>
<rect x="757.5" y="485.5" width="9" height="161" fill="#3d3d3d" stroke="#000" stroke-width="1"/>
<path d="M600 643.5 H623 M716.5 643.5 H739" stroke="#555" stroke-width="1"/>
<path d="M632.6 634 H650.2 Q651.4 634 651.1 635.2 L649.3 650.8 Q649.1 652 647.9 652 H628.4 Q627.2 652 627.5 650.8 L631.3 635.2 Q631.6 634 632.6 634 Z" fill="#a3a3a6"/>
<text x="640" y="648.7" text-anchor="middle" font-family="Liberation Sans, sans-serif" font-weight="bold" font-style="italic" font-size="21.5" fill="#14141f" textLength="16.5" lengthAdjust="spacingAndGlyphs">e</text>
<text x="651.3" y="649.3" font-family="Liberation Sans, sans-serif" font-weight="bold" font-style="italic" font-size="15.9" fill="#a3a3a6" textLength="38" lengthAdjust="spacingAndGlyphs">MO</text>
<path d="M693 635.5 L691.2 652.4" stroke="#484848" stroke-width="1"/>
<text x="694.2" y="649.3" font-family="Liberation Sans, sans-serif" font-style="italic" font-size="15.7" fill="#6e6e70" textLength="18.5" lengthAdjust="spacingAndGlyphs">Q4</text>
</svg>
<div class="lbl" style="left:18px;top:518px">FREQ</div>
<div class="vbox" style="left:22px;top:531px"><span>92</span></div>
<div class="lbl" style="left:18px;top:566px">Q</div>
<div class="vbox" style="left:22px;top:579px"><span>0.80</span></div>
<div class="lbl" style="left:87px;top:518px">GAIN</div>
<div class="vbox gbox" style="left:91px;top:531px"><span>0.0</span></div>
<div class="lbl" style="left:53px;top:619px">TYPE</div>
<div class="lbl" style="left:162px;top:518px">FREQ</div>
<div class="vbox" style="left:166px;top:531px"><span>351</span></div>
<div class="lbl" style="left:162px;top:566px">Q</div>
<div class="vbox" style="left:166px;top:579px"><span>0.80</span></div>
<div class="lbl" style="left:231px;top:518px">GAIN</div>
<div class="vbox gbox" style="left:235px;top:531px"><span>0.0</span></div>
<div class="lbl" style="left:197px;top:619px">TYPE</div>
<div class="lbl" style="left:305px;top:518px">FREQ</div>
<div class="vbox" style="left:309px;top:531px"><span>2890</span></div>
<div class="lbl" style="left:305px;top:566px">Q</div>
<div class="vbox" style="left:309px;top:579px"><span>0.80</span></div>
<div class="lbl" style="left:374px;top:518px">GAIN</div>
<div class="vbox gbox" style="left:378px;top:531px"><span>0.0</span></div>
<div class="lbl" style="left:340px;top:619px">TYPE</div>
<div class="lbl" style="left:449px;top:518px">FREQ</div>
<div class="vbox" style="left:453px;top:531px"><span>10992</span></div>
<div class="lbl" style="left:449px;top:566px">Q</div>
<div class="vbox" style="left:453px;top:579px"><span>0.80</span></div>
<div class="lbl" style="left:518px;top:518px">GAIN</div>
<div class="vbox gbox" style="left:522px;top:531px"><span>0.0</span></div>
<div class="lbl" style="left:483px;top:619px">TYPE</div>
<div class="lbl" style="left:641px;top:518px">GAIN</div>
<div class="vbox gbox" style="left:645px;top:531px"><span>0.0</span></div>
<div class="ms" style="top:482.8px">0</div>
<div class="ms" style="top:509.3px">-5</div>
<div class="ms" style="top:535.8px">-10</div>
<div class="ms" style="top:562.3px">-15</div>
<div class="ms" style="top:588.8px">-20</div>
<div class="ms" style="top:615.3px">-25</div>
<div class="ms" style="top:641.8px">-30</div>
</div>
<!-- borders -->
<div class="a" style="left:0;top:0;width:1px;height:672px;background:#54585f;"></div>
<div class="a" style="left:801px;top:0;width:1px;height:672px;background:#54585f;"></div><div class="a" style="left:800px;top:81px;width:1px;height:591px;background:#4e5258;"></div>
<div class="a" style="left:0;top:670px;width:802px;height:2px;background:#50555b;"></div>
</body>
</html>
